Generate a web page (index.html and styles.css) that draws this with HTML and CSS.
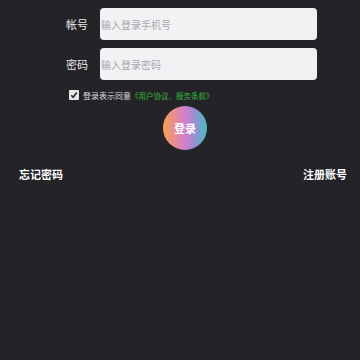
FILE: index.html
```html
<!DOCTYPE html>
<html lang="zh-CN">
<head>
    <meta charset="UTF-8">
    <meta name="viewport" content="width=device-width, initial-scale=1.0">
    <title>登录</title>
    <link rel="stylesheet" href="styles.css">
</head>
<body>
    <form class="login">
        <div class="row">
            <label for="phone">帐号</label>
            <input type="text" id="phone" placeholder="输入登录手机号">
        </div>
        <div class="row">
            <label for="pwd">密码</label>
            <input type="password" id="pwd" placeholder="输入登录密码">
        </div>
        <div class="agree">
            <span class="check"><svg viewBox="0 0 10 10" width="10" height="10"><path d="M2.3 5.2 L4.2 7.3 L7.8 2.6" fill="none" stroke="#2a2a2e" stroke-width="1.6"/></svg></span>
            <span class="agree-text">登录表示同意</span>
            <span class="agree-link">《用户协议、服务条款》</span>
        </div>
        <button type="submit" class="btn">登录</button>
    </form>
    <div class="links">
        <a>忘记密码</a>
        <a>注册账号</a>
    </div>
</body>
</html>
```

FILE: styles.css
```css
body { margin: 0; padding-top: 8px; background: #232328; font-family: "Noto Sans CJK SC", "Noto Sans", sans-serif; }
.login { margin-left: 66px; width: 251px; }
.row { display: flex; align-items: center; gap: 12px; margin-bottom: 8px; }
.row label { width: 22px; font-size: 11px; color: #e8e8e8; white-space: nowrap; }
.row input { flex: 1; height: 32px; box-sizing: border-box; border: none; border-radius: 4px; background: #f2f2f4; padding: 0 1px; font-size: 10px; font-family: inherit; outline: none; }
.row input::placeholder { color: #a8a8ac; }
.agree { display: flex; align-items: center; margin-left: 3px; margin-top: 1px; height: 14px; font-size: 8px; }
.check { width: 10px; height: 10px; background: #e6e6e6; border-radius: 1px; display: flex; }
.agree-text { color: #ddd; margin-left: 4px; }
.agree-link { color: #36b83a; font-size: 7.5px; }
.btn { display: block; width: 44px; height: 44px; margin: 4px 0 0 97px; border: none; border-radius: 50%; padding: 0; background: linear-gradient(90deg, #f7a24e 0%, #e58aa0 30%, #c77fd1 55%, #8f96d0 75%, #49bcc0 100%); color: #fff; font-size: 11px; font-weight: bold; font-family: inherit; }
.links { display: flex; justify-content: space-between; padding: 0 13px 0 19px; margin-top: 16px; font-size: 11px; font-weight: bold; color: #fff; }
```
